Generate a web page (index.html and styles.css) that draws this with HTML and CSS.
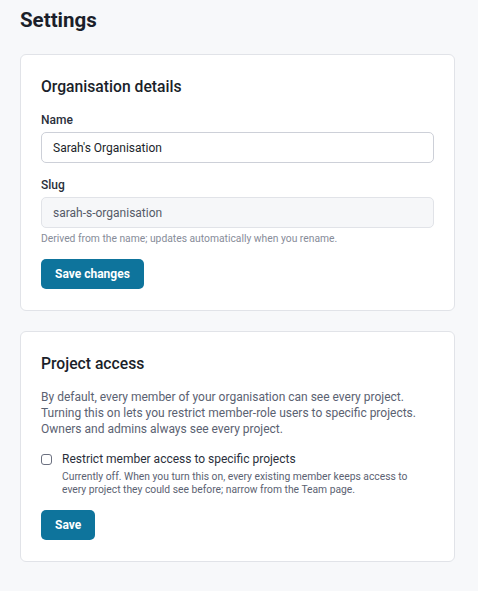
FILE: index.html
```html
<!DOCTYPE html>
<html lang="en">
<head>
  <meta charset="UTF-8" />
  <meta name="viewport" content="width=device-width, initial-scale=1.0"/>
  <title>Settings</title>
  <link rel="stylesheet" href="styles.css">
</head>
<body>
  <h1>Settings</h1>

  <!-- ORGANISATION -->
  <section class="card">
    <h2>Organisation details</h2>

    <label class="field-label" for="orgName">Name</label>
    <input id="orgName" class="input" type="text" value="Sarah's Organisation" />

    <label class="field-label" for="orgSlug">Slug</label>
    <input id="orgSlug" class="input readonly" type="text" value="sarah-s-organisation" readonly />
    <p class="hint">Derived from the name; updates automatically when you rename.</p>

    <button class="btn">Save changes</button>
  </section>

  <!-- PROJECT ACCESS -->
  <section class="card">
    <h2>Project access</h2>

    <p class="desc">By default, every member of your organisation can see every project. Turning this on lets you restrict member-role users to specific projects. Owners and admins always see every project.</p>

    <div class="check-row">
      <input type="checkbox" id="restrict" />
      <div>
        <label for="restrict" class="check-label">Restrict member access to specific projects</label>
        <p class="check-note">Currently off. When you turn this on, every existing member keeps access to every project they could see before; narrow from the Team page.</p>
      </div>
    </div>

    <button class="btn">Save</button>
  </section>
</body>
</html>
```

FILE: styles.css
```css
:root {
  --bg: #f7f8fa;
  --card: #ffffff;
  --border: #e1e3e8;
  --input-border: #cdd0d8;
  --text: #1b1f2a;
  --muted: #5b6272;
  --faint: #878c99;
  --primary: #0e749c;
}

* {
  margin: 0;
  padding: 0;
  box-sizing: border-box;
}

body {
  font-family: Roboto, sans-serif;
  background-color: var(--bg);
  color: var(--text);
  padding: 6px 20px 20px;
}

h1 {
  font-size: 20.5px;
  font-weight: 700;
  line-height: 28px;
  margin-bottom: 20px;
}

.card {
  background-color: var(--card);
  border: 1px solid var(--border);
  border-radius: 6px;
  padding: 20px 20px 21px;
  margin-bottom: 20px;
  width: 435px;
}

h2 {
  font-size: 15.7px;
  font-weight: 500;
  line-height: 24px;
  margin-bottom: 13px;
}

.field-label {
  display: block;
  font-size: 12px;
  font-weight: 500;
  line-height: 16px;
  margin-bottom: 4px;
  color: #2a2f3b;
}

.input {
  display: block;
  width: 100%;
  height: 31px;
  padding: 0 11px;
  border: 1px solid var(--input-border);
  border-radius: 5px;
  font-family: inherit;
  font-size: 12px;
  color: var(--text);
  background-color: #fff;
  margin-bottom: 14px;
}

.input.readonly {
  background-color: #f6f7f9;
  border-color: #e1e3e8;
  color: #555b68;
  margin-bottom: 4px;
}

.hint {
  font-size: 10.3px;
  line-height: 14px;
  color: var(--faint);
  margin-bottom: 13px;
}

.btn {
  display: inline-block;
  background-color: var(--primary);
  color: #fff;
  border: none;
  border-radius: 5px;
  padding: 0 14px;
  height: 30px;
  font-family: inherit;
  font-size: 12px;
  font-weight: 700;
  cursor: pointer;
}

.desc {
  font-size: 12px;
  line-height: 16px;
  color: var(--muted);
  margin-bottom: 14px;
}

.check-row {
  display: flex;
  gap: 10px;
  margin-bottom: 14px;
}

.check-row input {
  appearance: none;
  flex-shrink: 0;
  width: 11px;
  height: 11px;
  margin-top: 3px;
  border: 1px solid #6b7080;
  border-radius: 3px;
  background-color: #fff;
}

.check-row input:checked {
  background-color: var(--primary);
  border-color: var(--primary);
}

.check-label {
  display: block;
  font-size: 12px;
  line-height: 17px;
  color: #2a2f3b;
  margin-bottom: 2px;
}

.check-note {
  font-size: 10.3px;
  line-height: 13px;
  color: var(--muted);
}
```
